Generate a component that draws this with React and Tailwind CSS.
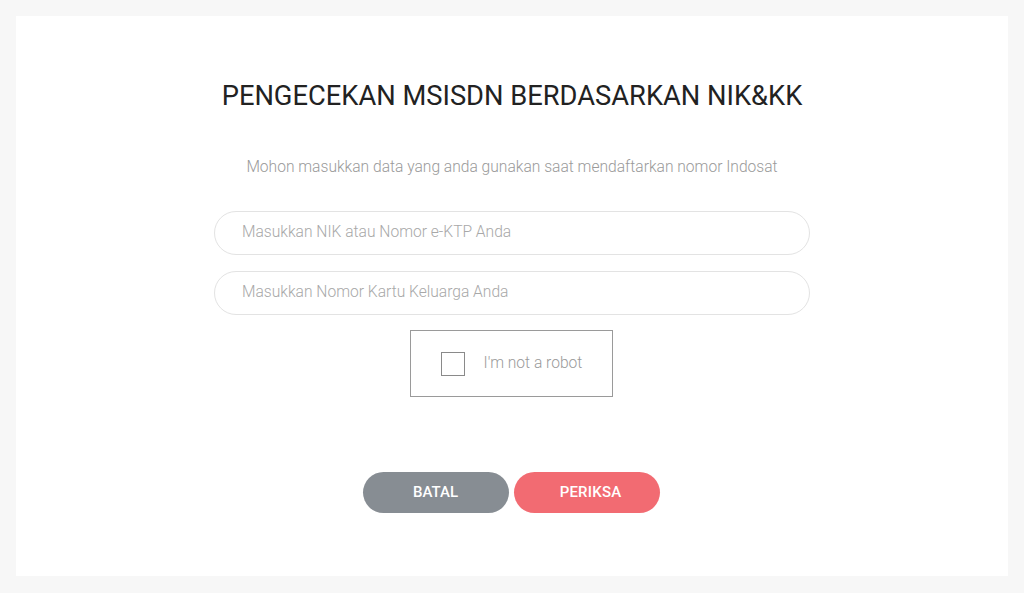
export default function App() {
  return (
    <div className="w-full h-[593px] bg-[#f7f7f7] p-4" style={{ fontFamily: "Roboto, 'Liberation Sans', sans-serif" }}>
      <div className="h-[560px] w-[992px] bg-white flex flex-col items-center">
        <h1 className="mt-[62px] text-[27.3px] leading-[36px] text-[#222] font-normal">
          PENGECEKAN MSISDN BERDASARKAN NIK&amp;KK
        </h1>
        <p className="mt-[42px] text-[15.6px] leading-[22px] text-[#9a9a9a] font-light">
          Mohon masukkan data yang anda gunakan saat mendaftarkan nomor Indosat
        </p>
        <div className="mt-[33px] flex flex-col gap-[16px]">
          <div className="w-[596px] h-[44px] rounded-full border border-[#e3e3e3] flex items-center pl-[27px] text-[15.6px] text-[#a8a8a8] font-light">
            Masukkan NIK atau Nomor e-KTP Anda
          </div>
          <div className="w-[596px] h-[44px] rounded-full border border-[#e3e3e3] flex items-center pl-[27px] text-[15.6px] text-[#a8a8a8] font-light">
            Masukkan Nomor Kartu Keluarga Anda
          </div>
        </div>
        <div className="mt-[15px] w-[203px] h-[67px] border border-[#9a9a9a] flex items-center pl-[30px] -translate-x-[1px]">
          <div className="w-[24px] h-[24px] border border-[#8a8a8a]"></div>
          <span className="ml-[19px] text-[15.6px] text-[#9a9a9a] font-light">I'm not a robot</span>
        </div>
        <div className="mt-[75px] flex gap-[5px] -translate-x-[1px]">
          <div className="w-[146px] h-[41px] rounded-full bg-[#878d93] flex items-center justify-center text-white text-[15px] font-medium">
            BATAL
          </div>
          <div className="w-[146px] h-[41px] rounded-full bg-[#f26b72] flex items-center justify-center pl-[8px] text-white text-[15px] font-medium tracking-[0.2px]">
            PERIKSA
          </div>
        </div>
      </div>
    </div>
  );
}
